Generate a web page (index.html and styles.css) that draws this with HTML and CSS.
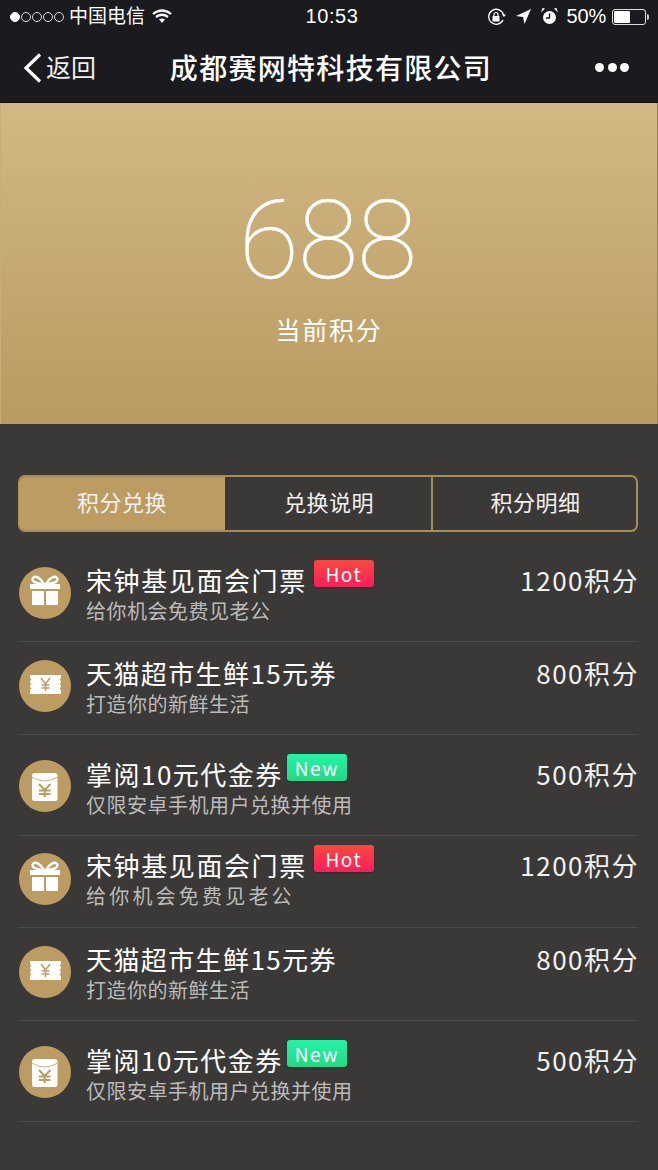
FILE: index.html
```html
<!DOCTYPE html>
<html lang="zh">
<head>
<meta charset="utf-8">
<title>积分</title>
<link rel="stylesheet" href="styles.css">
</head>
<body>
<svg class="defs" width="0" height="0">
  <symbol id="gift" viewBox="0 0 52 52">
    <path d="M25 17c-3-6-9-9-11-6s3 6 11 6zm2 0c3-6 9-9 11-6s-3 6-11 6z" fill="none" stroke="#fff" stroke-width="2.400"/>
    <path d="M11 17h30v5H11zM13 24h12v14H13zM27 24h12v14H27z" fill="#fff"/>
  </symbol>
  <symbol id="ticket" viewBox="0 0 52 52">
    <path d="M11 15h31v3l-1.500 1.500L42 21v1.500L40.500 24l1.500 1.500V27l-1.500 1.500L42 30v4H11v-4l1.500-1.500L11 27v-1.500l1.500-1.500L11 22.500V21l1.500-1.500L11 18z" fill="#fff"/>
    <path d="M22 18l4.500 6 4.500-6M26.500 24v7M22.500 25h8M22.500 28h8" fill="none" stroke="#bd9c63" stroke-width="1.500"/>
  </symbol>
  <symbol id="packet" viewBox="0 0 52 52">
    <rect x="13" y="13" width="25.500" height="28" rx="2.500" fill="#fff"/>
    <path d="M13 17q6 4 12.700 4t12.800-4" fill="none" stroke="#bd9c63" stroke-width=".8"/>
    <path d="M20 24l5.700 6 5.800-6M25.700 30v7M20 30.500h11.500M20 34h11.500" fill="none" stroke="#bd9c63" stroke-width="2"/>
  </symbol>
</svg>

<header class="top">
  <div class="status">
    <div class="status-left">
      <span class="signal"><i class="dot on"></i><i class="dot"></i><i class="dot"></i><i class="dot"></i><i class="dot"></i></span>
      <span class="carrier">中国电信</span>
      <svg class="wifi" width="20" height="14" viewBox="0 0 20 14"><path d="M1 5q9-7 18 0M4 8q6-4.500 12 0" fill="none" stroke="#fff" stroke-width="2.200"/><path d="M7 10.500q3-2 6 0L10 14z" fill="#fff"/></svg>
    </div>
    <div class="clock">10:53</div>
    <div class="status-right">
      <svg width="19" height="18" viewBox="0 0 19 18"><path d="M16 12A7.500 7.500 0 1 1 16.500 7" fill="none" stroke="#fff" stroke-width="1.300"/><path d="M15 6.500h4L17 9z" fill="#fff"/><rect x="5.500" y="8" width="7" height="5.500" rx=".5" fill="#fff"/><path d="M7 8V6.500a2 2 0 0 1 4 0V8" fill="none" stroke="#fff" stroke-width="1.200"/></svg>
      <svg class="arrow" width="15" height="15" viewBox="0 0 15 15"><path d="M15 0L0 7l7 1 1.500 7z" fill="#fff"/></svg>
      <svg class="alarm" width="17" height="17" viewBox="0 0 17 17"><circle cx="8.500" cy="9.500" r="6.500" fill="#fff"/><path d="M8.500 5.500v4.500H5" fill="none" stroke="#1b1a1f" stroke-width="1.400"/><path d="M0 4.500L4 .5 1.500 0zM17 4.500L13 .5 15.500 0z" fill="#fff"/></svg>
      <span class="pct">50%</span>
      <span class="battery"><span class="battery-fill"></span></span><span class="battery-tip"></span>
    </div>
  </div>
  <nav class="nav">
    <div class="back">
      <svg width="20" height="32" viewBox="0 0 20 32"><path d="M18 2.500L4 16l14 13.500" fill="none" stroke="#fff" stroke-width="3.200"/></svg>
      <span class="back-label">返回</span>
    </div>
    <h1 class="title">成都赛网特科技有限公司</h1>
    <div class="more"><i></i><i></i><i></i></div>
  </nav>
</header>

<section class="hero">
  <div class="score">688</div>
  <div class="score-label">当前积分</div>
</section>

<main class="content">
  <div class="tabs">
    <div class="tab active">积分兑换</div>
    <div class="tab">兑换说明</div>
    <div class="tab">积分明细</div>
  </div>
  <ul class="list">
    <li class="row row-a">
      <svg class="icon"><use href="#gift"/></svg>
      <div class="info"><div class="name"><span>宋钟基见面会门票</span><em class="tag hot">Hot</em></div><div class="desc">给你机会免费见老公</div></div>
      <div class="pts">1200积分</div>
    </li>
    <li class="row row-b">
      <svg class="icon"><use href="#ticket"/></svg>
      <div class="info"><div class="name"><span>天猫超市生鲜15元券</span></div><div class="desc">打造你的新鲜生活</div></div>
      <div class="pts">800积分</div>
    </li>
    <li class="row row-c">
      <svg class="icon"><use href="#packet"/></svg>
      <div class="info"><div class="name"><span>掌阅10元代金券</span><em class="tag new">New</em></div><div class="desc">仅限安卓手机用户兑换并使用</div></div>
      <div class="pts">500积分</div>
    </li>
    <li class="row row-d">
      <svg class="icon"><use href="#gift"/></svg>
      <div class="info"><div class="name"><span>宋钟基见面会门票</span><em class="tag hot">Hot</em></div><div class="desc wide">给你机会免费见老公</div></div>
      <div class="pts">1200积分</div>
    </li>
    <li class="row row-b">
      <svg class="icon"><use href="#ticket"/></svg>
      <div class="info"><div class="name"><span>天猫超市生鲜15元券</span></div><div class="desc">打造你的新鲜生活</div></div>
      <div class="pts">800积分</div>
    </li>
    <li class="row row-c">
      <svg class="icon"><use href="#packet"/></svg>
      <div class="info"><div class="name"><span>掌阅10元代金券</span><em class="tag new">New</em></div><div class="desc">仅限安卓手机用户兑换并使用</div></div>
      <div class="pts">500积分</div>
    </li>
  </ul>
</main>
</body>
</html>
```
FILE: styles.css
```css
* { box-sizing: border-box; margin: 0; padding: 0; }
html, body { height: 100%; }
body {
  width: 658px;
  height: 1170px;
  overflow: hidden;
  background: #3a3938;
  color: #fff;
  font-family: "Noto Sans CJK SC", "Noto Sans", sans-serif;
}
.defs { display: block; height: 0; }
.top { height: 103px; background: #1b1a1f; border-bottom: 1px solid #111; }
.status {
  height: 33px;
  display: flex;
  align-items: center;
  position: relative;
  padding: 0 9px 0 10px;
  justify-content: space-between;
  font-family: "Liberation Sans", "Noto Sans CJK SC", sans-serif;
}
.status-left, .status-right { display: flex; align-items: center; }
.signal { display: flex; gap: 1px; margin-right: 5px; }
.dot { width: 10px; height: 10px; border: 1px solid #ddd; border-radius: 50%; }
.dot.on { background: #fff; border-color: #fff; }
.carrier { font-size: 19px; line-height: 33px; }
.wifi { margin-left: 7px; margin-top: -2px; }
.clock {
  position: absolute;
  left: 6px;
  right: 0;
  text-align: center;
  font-size: 20px;
  letter-spacing: .6px;
  pointer-events: none;
}
.status-right svg { display: block; }
.arrow { margin-left: 10px; }
.alarm { margin-left: 10px; }
.pct { font-size: 20px; margin-left: 9px; letter-spacing: -.2px; }
.battery { width: 34px; height: 16px; margin-left: 6px; border: 1px solid #ddd; border-radius: 3px; padding: 1px; display: block; }
.battery-fill { display: block; width: 16px; height: 100%; background: #fff; border-radius: 1px; }
.battery-tip { width: 2px; height: 6px; background: #ccc; border-radius: 0 2px 2px 0; margin-left: 1px; }
.nav {
  height: 69px;
  display: flex;
  align-items: center;
  position: relative;
  padding: 0 29px 0 22px;
  justify-content: space-between;
}
.back { display: flex; align-items: center; gap: 5px; font-size: 25px; color: #eee; }
.back-label { margin-top: -4px; margin-left: -1px; }
.title {
  position: absolute;
  left: 4px;
  right: 0;
  text-align: center;
  font-size: 28px;
  font-weight: 500;
  letter-spacing: 1.300px;
  line-height: 67px;
}
.more { display: flex; gap: 3.500px; }
.more i { width: 9px; height: 9px; border-radius: 50%; background: #fff; }
.hero {
  height: 321px;
  background: linear-gradient(180deg, #d2b884 0%, #b99a61 100%);
  border-right: 1px solid #9b8355;
  border-left: 1px solid #c7ad79;
  display: flex;
  flex-direction: column;
  align-items: center;
}
.score {
  font-family: "Roboto", sans-serif;
  font-weight: 100;
  font-size: 110px;
  line-height: 120px;
  margin-top: 78px;
  letter-spacing: -1px;
  -webkit-text-stroke: .4px #fff;
  margin-right: 3px;
}
.score-label { font-size: 25px; line-height: 36px; margin-top: 10px; letter-spacing: 1.800px; }
.content { padding: 51px 20px 0 18px; }
.tabs {
  display: flex;
  height: 57px;
  border: 1px solid #a88c58;
  border-width: 2px 2px 2px 1px;
  border-radius: 7px;
  overflow: hidden;
}
.tab {
  flex: 1 1 0;
  display: flex;
  align-items: center;
  justify-content: center;
  font-size: 22px;
  letter-spacing: .5px;
  color: #f4f2ee;
  padding: 0 0 5px 2px;
  border-left: 2px solid #a88c58;
}
.tab:first-child { border-left: 0; }
.tab.active { background: #bd9c63; flex: 0 0 206px; margin: -1px 0; padding-left: 0; }
.tab:nth-child(2) { border-left: 0; flex: 0 0 206px; }
.list { list-style: none; margin-top: 17px; }
.row {
  display: flex;
  align-items: flex-start;
  border-bottom: 1px solid #4c4b4a;
}
.row-a { height: 93px; padding-top: 14px; }
.row-b { height: 93px; padding-top: 14px; }
.row-c { height: 101px; padding-top: 22px; }
.row-d { height: 92px; padding-top: 12px; }
.icon {
  flex: none;
  width: 52px;
  height: 52px;
  margin: 4px 0 0 1px;
  border-radius: 50%;
  background: #bd9c63;
}
.row-c .icon { margin-top: 3px; }
.row-d .icon { margin-top: 5px; }
.info { margin-left: 15px; flex: 1; min-width: 0; }
.name { display: flex; align-items: flex-start; font-size: 26px; line-height: 34px; letter-spacing: 1.600px; color: #fff; }
.row-b .name { letter-spacing: 1.400px; }
.row-c .name { letter-spacing: 1.500px; }
.desc { font-size: 20px; line-height: 26px; margin-top: 1px; letter-spacing: .5px; color: #bcbbb9; }
.desc.wide { letter-spacing: 3.200px; }
.tag {
  font-style: normal;
  font-size: 19px;
  letter-spacing: 1.500px;
  height: 27px;
  line-height: 27px;
  width: 60px;
  text-align: center;
  border-radius: 3px;
  margin: -3px 0 0 7px;
  box-shadow: 0 1px 2px rgba(0,0,0,.3);
}
.tag.new { margin-left: 4px; }
.tag.hot { background: linear-gradient(180deg, #f64a3e, #fd1d5c); }
.tag.new { background: linear-gradient(180deg, #24f3a6, #24d884); }
.pts {
  font-size: 26px;
  line-height: 34px;
  letter-spacing: 1.500px;
  margin-right: -1px;
  color: #f2f1ef;
}
```
